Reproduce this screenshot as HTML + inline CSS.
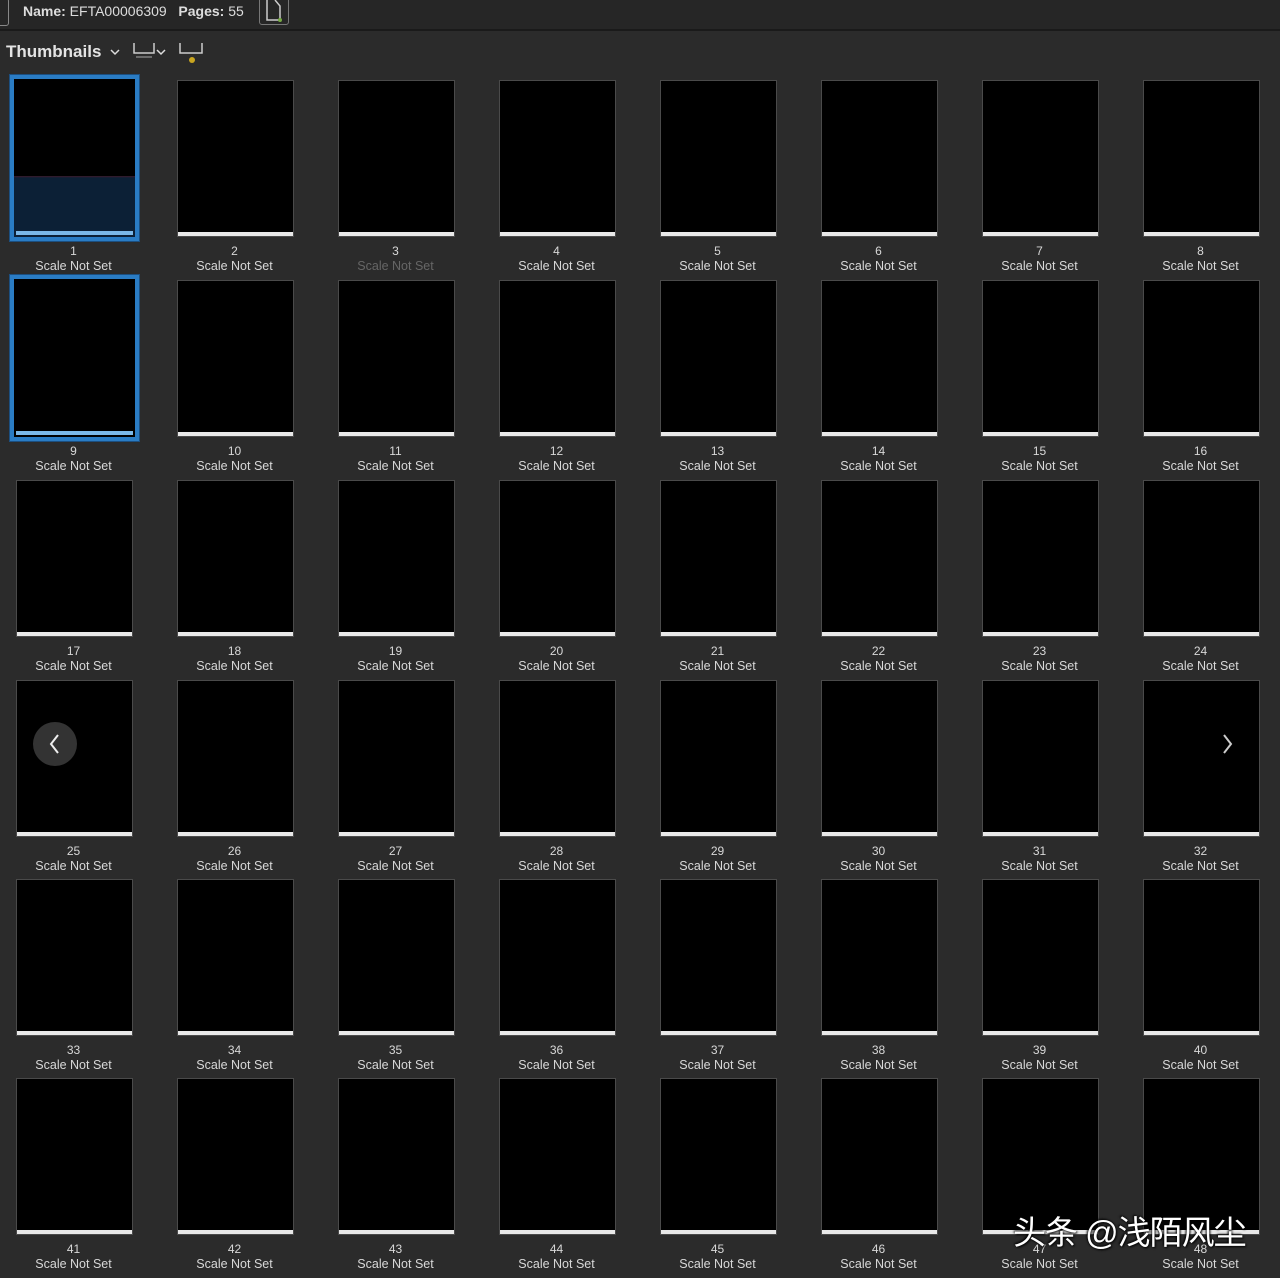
<!DOCTYPE html>
<html><head><meta charset="utf-8"><style>
*{margin:0;padding:0;box-sizing:border-box}
body{width:1280px;height:1277px;background:#2b2b2b;position:relative;overflow:hidden;font-family:"Liberation Sans","Noto Sans CJK SC",sans-serif;color:#ddd}
.top{position:absolute;left:0;top:0;width:1280px;height:31px;background:#262626;border-bottom:2px solid #1a1a1a}
.c{position:absolute;width:118px;height:200px;margin-left:-1px}
.t{position:absolute;left:0;top:0;width:117px;height:157px;background:#000;border:1px solid #4a4a4a}
.t::after{content:"";position:absolute;left:0;right:0;bottom:0;height:4px;background:#e8e8e8}
.n{position:absolute;left:0;width:115px;top:164px;text-align:center;font-size:12px;color:#d8d8d8}
.l{position:absolute;left:-22px;width:159px;top:179px;text-align:center;font-size:12.5px;color:#d8d8d8}
.sel .t{border:4px solid #2a7cc4;left:-6px;top:-5px;width:129px;height:166px;box-shadow:0 0 0 1px #1c4f80}
.sel .t::after{left:2px;right:2px;bottom:2px;background:#7bb8e8}
</style></head><body>
<div class="top">
<div style="position:absolute;left:-4px;top:-2px;width:13px;height:28px;border:1px solid #888;border-radius:3px"></div>
<div style="position:absolute;left:23px;top:3px;font-size:14px;color:#ddd"><b>Name:</b> EFTA00006309 &nbsp;&nbsp;<b>Pages:</b> 55</div>
<div style="position:absolute;left:259px;top:-3px;width:30px;height:28px;border:1px solid #777;border-radius:3px"></div>
<svg style="position:absolute;left:264px;top:0" width="20" height="24"><path d="M3 0 V20 H16 V6 L11 0" fill="none" stroke="#ccc" stroke-width="1.5"/><circle cx="16" cy="20" r="2" fill="#7a4"/></svg>
</div>
<div style="position:absolute;left:6px;top:42px;font-size:17px;font-weight:bold;color:#e4e4e4">Thumbnails</div>
<svg style="position:absolute;left:108px;top:40px" width="100" height="30"><path d="M3 10 L7 14 L11 10" fill="none" stroke="#ddd" stroke-width="1.5"/><path d="M26 3 V13 H46 V3" fill="none" stroke="#ccc" stroke-width="1.5"/><path d="M28 17 H44" stroke="#aaa" stroke-width="1"/><path d="M49 10 L53 14 L57 10" fill="none" stroke="#ddd" stroke-width="1.5"/><path d="M72 3 V13 H94 V3" fill="none" stroke="#ccc" stroke-width="1.5"/><circle cx="84" cy="20" r="3" fill="#c9a520"/></svg>

<div class="c sel" style="left:17px;top:80px"><div class="t" style="background:linear-gradient(#000 0,#000 97px,#3a1a2a 97px,#0c2036 99px,#0c2036 100%)"></div><div class="n">1</div><div class="l">Scale Not Set</div></div>
<div class="c" style="left:178px;top:80px"><div class="t"></div><div class="n">2</div><div class="l">Scale Not Set</div></div>
<div class="c" style="left:339px;top:80px"><div class="t"></div><div class="n">3</div><div class="l" style="color:#666">Scale Not Set</div></div>
<div class="c" style="left:500px;top:80px"><div class="t"></div><div class="n">4</div><div class="l">Scale Not Set</div></div>
<div class="c" style="left:661px;top:80px"><div class="t"></div><div class="n">5</div><div class="l">Scale Not Set</div></div>
<div class="c" style="left:822px;top:80px"><div class="t"></div><div class="n">6</div><div class="l">Scale Not Set</div></div>
<div class="c" style="left:983px;top:80px"><div class="t"></div><div class="n">7</div><div class="l">Scale Not Set</div></div>
<div class="c" style="left:1144px;top:80px"><div class="t"></div><div class="n">8</div><div class="l">Scale Not Set</div></div>

<div class="c sel" style="left:17px;top:280px"><div class="t"></div><div class="n">9</div><div class="l">Scale Not Set</div></div>
<div class="c" style="left:178px;top:280px"><div class="t"></div><div class="n">10</div><div class="l">Scale Not Set</div></div>
<div class="c" style="left:339px;top:280px"><div class="t"></div><div class="n">11</div><div class="l">Scale Not Set</div></div>
<div class="c" style="left:500px;top:280px"><div class="t"></div><div class="n">12</div><div class="l">Scale Not Set</div></div>
<div class="c" style="left:661px;top:280px"><div class="t"></div><div class="n">13</div><div class="l">Scale Not Set</div></div>
<div class="c" style="left:822px;top:280px"><div class="t"></div><div class="n">14</div><div class="l">Scale Not Set</div></div>
<div class="c" style="left:983px;top:280px"><div class="t"></div><div class="n">15</div><div class="l">Scale Not Set</div></div>
<div class="c" style="left:1144px;top:280px"><div class="t"></div><div class="n">16</div><div class="l">Scale Not Set</div></div>

<div class="c" style="left:17px;top:480px"><div class="t"></div><div class="n">17</div><div class="l">Scale Not Set</div></div>
<div class="c" style="left:178px;top:480px"><div class="t"></div><div class="n">18</div><div class="l">Scale Not Set</div></div>
<div class="c" style="left:339px;top:480px"><div class="t"></div><div class="n">19</div><div class="l">Scale Not Set</div></div>
<div class="c" style="left:500px;top:480px"><div class="t"></div><div class="n">20</div><div class="l">Scale Not Set</div></div>
<div class="c" style="left:661px;top:480px"><div class="t"></div><div class="n">21</div><div class="l">Scale Not Set</div></div>
<div class="c" style="left:822px;top:480px"><div class="t"></div><div class="n">22</div><div class="l">Scale Not Set</div></div>
<div class="c" style="left:983px;top:480px"><div class="t"></div><div class="n">23</div><div class="l">Scale Not Set</div></div>
<div class="c" style="left:1144px;top:480px"><div class="t"></div><div class="n">24</div><div class="l">Scale Not Set</div></div>

<div class="c" style="left:17px;top:680px"><div class="t"></div><div class="n">25</div><div class="l">Scale Not Set</div></div>
<div class="c" style="left:178px;top:680px"><div class="t"></div><div class="n">26</div><div class="l">Scale Not Set</div></div>
<div class="c" style="left:339px;top:680px"><div class="t"></div><div class="n">27</div><div class="l">Scale Not Set</div></div>
<div class="c" style="left:500px;top:680px"><div class="t"></div><div class="n">28</div><div class="l">Scale Not Set</div></div>
<div class="c" style="left:661px;top:680px"><div class="t"></div><div class="n">29</div><div class="l">Scale Not Set</div></div>
<div class="c" style="left:822px;top:680px"><div class="t"></div><div class="n">30</div><div class="l">Scale Not Set</div></div>
<div class="c" style="left:983px;top:680px"><div class="t"></div><div class="n">31</div><div class="l">Scale Not Set</div></div>
<div class="c" style="left:1144px;top:680px"><div class="t"></div><div class="n">32</div><div class="l">Scale Not Set</div></div>

<div class="c" style="left:17px;top:879px"><div class="t"></div><div class="n">33</div><div class="l">Scale Not Set</div></div>
<div class="c" style="left:178px;top:879px"><div class="t"></div><div class="n">34</div><div class="l">Scale Not Set</div></div>
<div class="c" style="left:339px;top:879px"><div class="t"></div><div class="n">35</div><div class="l">Scale Not Set</div></div>
<div class="c" style="left:500px;top:879px"><div class="t"></div><div class="n">36</div><div class="l">Scale Not Set</div></div>
<div class="c" style="left:661px;top:879px"><div class="t"></div><div class="n">37</div><div class="l">Scale Not Set</div></div>
<div class="c" style="left:822px;top:879px"><div class="t"></div><div class="n">38</div><div class="l">Scale Not Set</div></div>
<div class="c" style="left:983px;top:879px"><div class="t"></div><div class="n">39</div><div class="l">Scale Not Set</div></div>
<div class="c" style="left:1144px;top:879px"><div class="t"></div><div class="n">40</div><div class="l">Scale Not Set</div></div>

<div class="c" style="left:17px;top:1078px"><div class="t"></div><div class="n">41</div><div class="l">Scale Not Set</div></div>
<div class="c" style="left:178px;top:1078px"><div class="t"></div><div class="n">42</div><div class="l">Scale Not Set</div></div>
<div class="c" style="left:339px;top:1078px"><div class="t"></div><div class="n">43</div><div class="l">Scale Not Set</div></div>
<div class="c" style="left:500px;top:1078px"><div class="t"></div><div class="n">44</div><div class="l">Scale Not Set</div></div>
<div class="c" style="left:661px;top:1078px"><div class="t"></div><div class="n">45</div><div class="l">Scale Not Set</div></div>
<div class="c" style="left:822px;top:1078px"><div class="t"></div><div class="n">46</div><div class="l">Scale Not Set</div></div>
<div class="c" style="left:983px;top:1078px"><div class="t"></div><div class="n">47</div><div class="l">Scale Not Set</div></div>
<div class="c" style="left:1144px;top:1078px"><div class="t"></div><div class="n">48</div><div class="l">Scale Not Set</div></div>

<div style="position:absolute;left:33px;top:722px;width:44px;height:44px;border-radius:50%;background:#333"></div>
<svg style="position:absolute;left:33px;top:722px" width="44" height="44"><path d="M25 13 L18 22 L25 31" fill="none" stroke="#eee" stroke-width="2"/></svg>
<svg style="position:absolute;left:1206px;top:722px" width="44" height="44"><path d="M18 13 L25 22 L18 31" fill="none" stroke="#ccc" stroke-width="2"/></svg>

<div style="position:absolute;left:1013px;top:1206px;font-size:33px;color:#fff;font-family:'Liberation Sans','Noto Sans CJK SC',sans-serif;text-shadow:1px 1px 2px #000,-1px -1px 2px #000;letter-spacing:-1px">头条 @浅陌风尘</div>
</body></html>
